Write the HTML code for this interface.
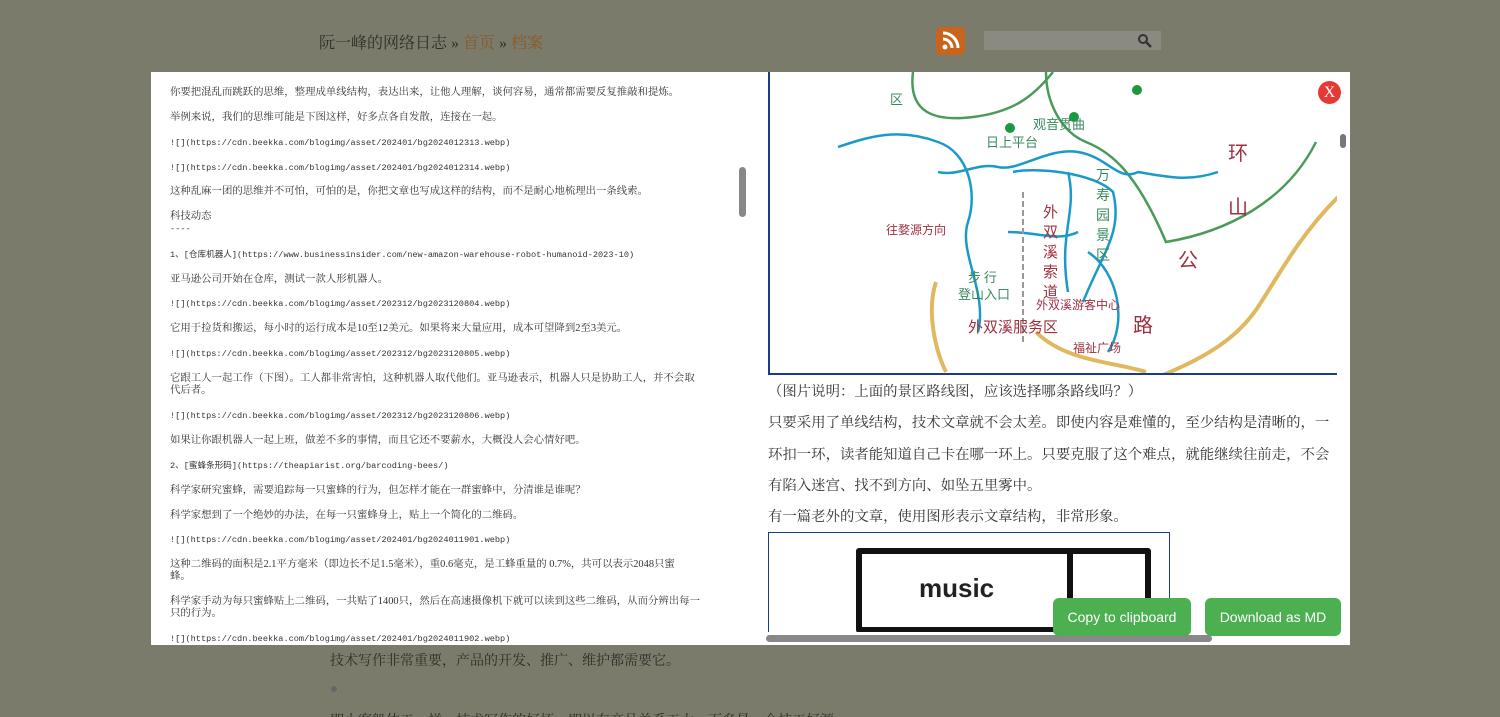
<!DOCTYPE html>
<html><head><meta charset="utf-8"><style>
*{margin:0;padding:0;box-sizing:border-box}
html,body{width:1500px;height:717px;overflow:hidden}
body{background:#7b7b6b;font-family:"Liberation Serif","Noto Serif CJK SC",serif;position:relative}
.hdr{position:absolute;left:319px;top:30px;font-size:16px;color:#2e2e28}
.hdr a{color:#8a5a25;text-decoration:none}
.rss{position:absolute;left:936px;top:27px;width:29px;height:28px;background:#c8641c;border-radius:5px}
.search{position:absolute;left:984px;top:31px;width:177px;height:19px;background:#8a8a80}
.left{position:absolute;left:151px;top:72px;width:600px;height:573px;background:#fff;overflow:hidden}
.left p{position:absolute;left:19px;font-size:10.4px;color:#333;line-height:12.5px;white-space:nowrap;font-family:"Liberation Serif","Noto Serif CJK SC",serif}
.left p.mono{font-family:"Liberation Mono","Noto Sans CJK SC",monospace;font-size:8.6px}
.right{position:absolute;left:751px;top:72px;width:599px;height:573px;background:#fff;overflow:hidden}
.rt{position:absolute;left:17px;font-size:14.4px;color:#333;white-space:nowrap}
.btn{position:absolute;top:598px;height:38px;background:#4caf50;color:#fff;border-radius:6px;font-family:"Liberation Sans",sans-serif;font-size:14px;line-height:38px;text-align:center}
</style></head><body>
<div class="hdr">阮一峰的网络日志 » <a>首页</a> » <a>档案</a></div>
<div class="rss"><svg width="29" height="28"><circle cx="9" cy="20" r="2.5" fill="#fff"/><path d="M7 12a9 9 0 0 1 9 9M7 6a15 15 0 0 1 15 15" stroke="#fff" stroke-width="3" fill="none"/></svg></div>
<div class="search"><svg style="position:absolute;left:152px;top:1px" width="18" height="16"><circle cx="7" cy="7" r="4" stroke="#333" stroke-width="2" fill="none"/><path d="M10 10l5 5" stroke="#333" stroke-width="2.5"/></svg></div>
<div style="position:absolute;left:330px;top:650px;font-size:14px;color:#2e2e28">技术写作非常重要，产品的开发、推广、维护都需要它。</div>
<div style="position:absolute;left:331px;top:686px;width:6px;height:6px;border-radius:3px;background:#666"></div>
<div style="position:absolute;left:330px;top:710px;font-size:14px;color:#2e2e28">即小客般体工一样，技术写作的好坏，即以在产品关系工大一下多是一个技工好源</div>
<div class="left">
<p style="top:15px">你要把混乱而跳跃的思维，整理成单线结构，表达出来，让他人理解，谈何容易，通常都需要反复推敲和提炼。</p>
<p style="top:40px">举例来说，我们的思维可能是下图这样，好多点各自发散，连接在一起。</p>
<p class="mono" style="top:65px">![](https://cdn.beekka.com/blogimg/asset/202401/bg2024012313.webp)</p>
<p class="mono" style="top:90px">![](https://cdn.beekka.com/blogimg/asset/202401/bg2024012314.webp)</p>
<p style="top:114px">这种乱麻一团的思维并不可怕，可怕的是，你把文章也写成这样的结构，而不是耐心地梳理出一条线索。</p>
<p style="top:139px">科技动态</p>
<p class="mono" style="top:151px">----</p>
<p class="mono" style="top:177px">1、[仓库机器人](https://www.businessinsider.com/new-amazon-warehouse-robot-humanoid-2023-10)</p>
<p style="top:202px">亚马逊公司开始在仓库，测试一款人形机器人。</p>
<p class="mono" style="top:226px">![](https://cdn.beekka.com/blogimg/asset/202312/bg2023120804.webp)</p>
<p style="top:251px">它用于捡货和搬运，每小时的运行成本是10至12美元。如果将来大量应用，成本可望降到2至3美元。</p>
<p class="mono" style="top:276px">![](https://cdn.beekka.com/blogimg/asset/202312/bg2023120805.webp)</p>
<p style="top:301px">它跟工人一起工作（下图）。工人都非常害怕，这种机器人取代他们。亚马逊表示，机器人只是协助工人，并不会取</p>
<p style="top:313px">代后者。</p>
<p class="mono" style="top:338px">![](https://cdn.beekka.com/blogimg/asset/202312/bg2023120806.webp)</p>
<p style="top:363px">如果让你跟机器人一起上班，做差不多的事情，而且它还不要薪水，大概没人会心情好吧。</p>
<p class="mono" style="top:388px">2、[蜜蜂条形码](https://theapiarist.org/barcoding-bees/)</p>
<p style="top:413px">科学家研究蜜蜂，需要追踪每一只蜜蜂的行为，但怎样才能在一群蜜蜂中，分清谁是谁呢？</p>
<p style="top:438px">科学家想到了一个绝妙的办法，在每一只蜜蜂身上，贴上一个简化的二维码。</p>
<p class="mono" style="top:462px">![](https://cdn.beekka.com/blogimg/asset/202401/bg2024011901.webp)</p>
<p style="top:487px">这种二维码的面积是2.1平方毫米（即边长不足1.5毫米），重0.6毫克，是工蜂重量的 0.7%，共可以表示2048只蜜</p>
<p style="top:499px">蜂。</p>
<p style="top:524px">科学家手动为每只蜜蜂贴上二维码，一共贴了1400只，然后在高速摄像机下就可以读到这些二维码，从而分辨出每一</p>
<p style="top:536px">只的行为。</p>
<p class="mono" style="top:561px">![](https://cdn.beekka.com/blogimg/asset/202401/bg2024011902.webp)</p>
<div style="position:absolute;left:588px;top:95px;width:7px;height:50px;background:#888;border-radius:4px"></div>
</div>
<div class="right">
<svg style="position:absolute;left:17px;top:0" width="569" height="303">
<rect width="569" height="303" fill="#fff"/>
<path d="M145 0c-5 40 20 50 60 45s60-20 80-45M278 0c0 30 15 60 40 70s50 30 80 100c60-10 120-40 150-100" stroke="#4a9a5a" stroke-width="2.5" fill="none"/>
<path d="M70 75c30-10 60-20 100-5c30 10 40 50 30 80c-10 30 20 70 10 110M170 100c20 5 40-10 60-5s50-20 80-15s40 30 60 20c30 5 50 10 80 0M320 180c30 20 40 70 20 100M240 160c30 0 50 10 70 0" stroke="#1a9ac8" stroke-width="2.5" fill="none"/>
<path d="M245 100c20-5 80 0 100 20c10 40-10 60-30 110M300 100c10 40 -10 60 0 120" stroke="#1a9ac8" stroke-width="2.5" fill="none"/>
<path d="M168 210c-10 30 0 70 10 90M268 260c30 30 80 30 110 40M570 125c-40 40-60 80-80 110s-50 50-100 70" stroke="#e0b860" stroke-width="4" fill="none"/>
<path d="M255 120v150" stroke="#999" stroke-width="2" stroke-dasharray="6 3"/>
<circle cx="369" cy="18" r="5" fill="#1a9a40"/><circle cx="306" cy="45" r="5" fill="#1a9a40"/><circle cx="242" cy="56" r="5" fill="#1a9a40"/>
<g font-family="Noto Sans CJK SC,sans-serif" font-size="13" fill="#3a8a60"><text x="122" y="32">区</text><text x="265" y="57">观音贯曲</text><text x="218" y="75">日上平台</text><text x="200" y="210">步 行</text><text x="190" y="227">登山入口</text></g>
<g font-family="Noto Sans CJK SC,sans-serif" font-size="14" fill="#3a8a60"><text x="328" y="108">万</text><text x="328" y="128">寿</text><text x="328" y="148">园</text><text x="328" y="168">景</text><text x="328" y="188">区</text></g>
<g font-family="Noto Sans CJK SC,sans-serif" fill="#a03040"><text x="118" y="162" font-size="12">往婺源方向</text><text x="275" y="145" font-size="15">外</text><text x="275" y="165" font-size="15">双</text><text x="275" y="185" font-size="15">溪</text><text x="275" y="205" font-size="15">索</text><text x="275" y="225" font-size="15">道</text><text x="268" y="237" font-size="12">外双溪游客中心</text><text x="200" y="260" font-size="15">外双溪服务区</text><text x="305" y="280" font-size="12">福祉广场</text><text x="460" y="88" font-size="20">环</text><text x="460" y="142" font-size="20">山</text><text x="410" y="195" font-size="20">公</text><text x="365" y="260" font-size="20">路</text></g>
<rect y="301" width="569" height="2" fill="#1a3a8a"/><rect width="2" height="303" fill="#1a3a8a"/></svg>
<div class="rt" style="top:308px">（图片说明：上面的景区路线图，应该选择哪条路线吗？）</div>
<div class="rt" style="top:339px">只要采用了单线结构，技术文章就不会太差。即使内容是难懂的，至少结构是清晰的，一</div>
<div class="rt" style="top:371px">环扣一环，读者能知道自己卡在哪一环上。只要克服了这个难点，就能继续往前走，不会</div>
<div class="rt" style="top:402px">有陷入迷宫、找不到方向、如坠五里雾中。</div>
<div class="rt" style="top:433px">有一篇老外的文章，使用图形表示文章结构，非常形象。</div>
<div style="position:absolute;left:17px;top:460px;width:402px;height:100px;border:1.5px solid #1a3a8a;border-bottom:none;background:#fff">
<div style="position:absolute;left:87px;top:15px;width:295px;height:85px;border:6px solid #111;border-radius:3px"></div>
<div style="position:absolute;left:298px;top:15px;width:6px;height:85px;background:#111"></div>
<div style="position:absolute;left:150px;top:40px;font-family:'Liberation Sans',sans-serif;font-size:26px;font-weight:bold;color:#222">music</div></div>
<div style="position:absolute;left:0;top:560px;width:599px;height:13px;background:#fff"></div>
<div style="position:absolute;left:15px;top:563px;width:446px;height:7px;background:#888;border-radius:4px"></div>
<div style="position:absolute;left:589px;top:62px;width:6px;height:14px;background:#777;border-radius:3px"></div>
<div style="position:absolute;left:567px;top:9px;width:23px;height:23px;border-radius:12px;background:#e53935;color:#fff;font-size:16px;text-align:center;line-height:23px">X</div>
</div>
<div class="btn" style="left:1053px;width:138px">Copy to clipboard</div>
<div class="btn" style="left:1205px;width:136px">Download as MD</div>
</body></html>
